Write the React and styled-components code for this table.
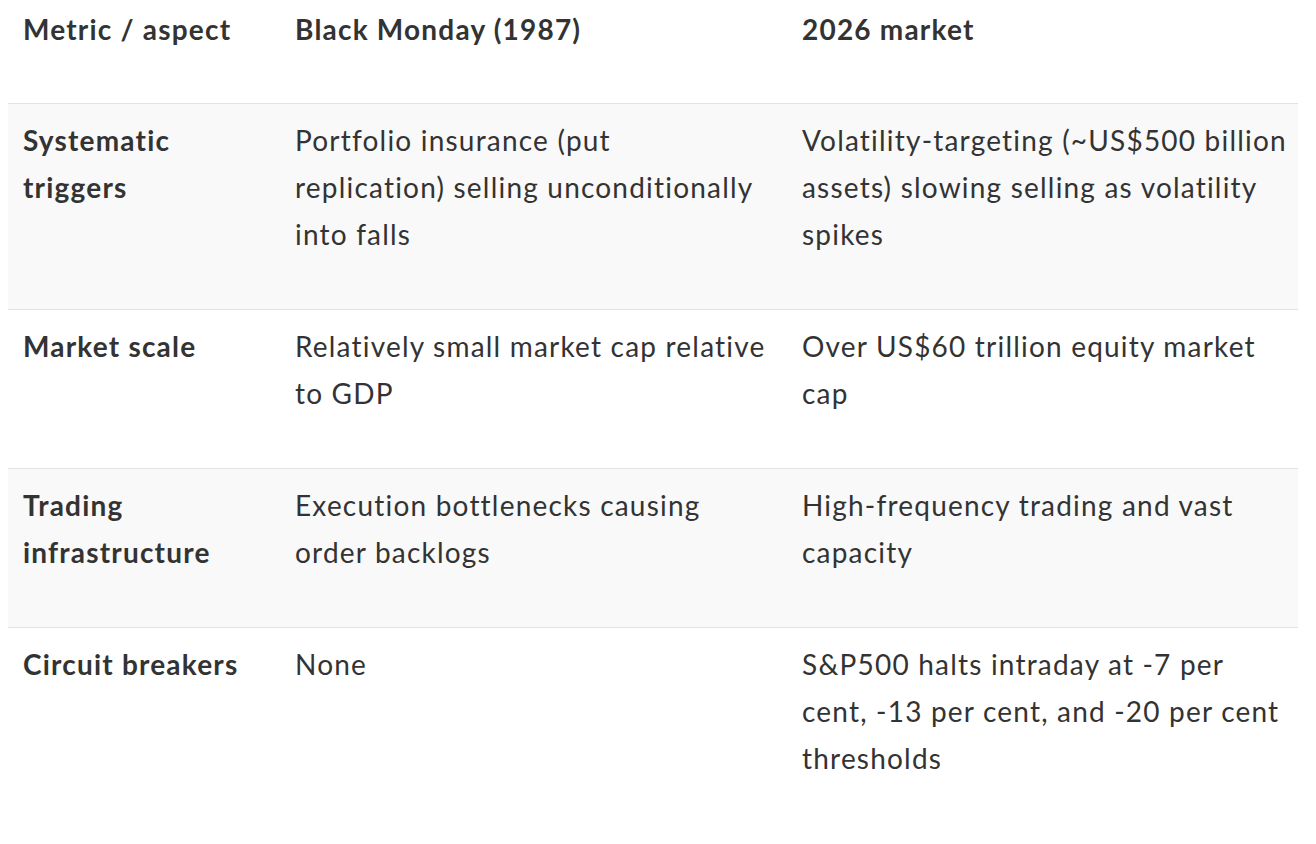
import React from "react";
import styled, { createGlobalStyle } from "styled-components";

const Global = createGlobalStyle`
  html, body { margin: 0; padding: 0; background: #fff; }
  body { padding: 0 8px; }
`;

const Table = styled.table`
  width: 1290px;
  border-collapse: collapse;
  table-layout: fixed;
  font-family: Lato, "Open Sans", sans-serif;
  font-size: 28px;
  line-height: 47px;
  letter-spacing: 1.2px;
  color: #333;
`;

const Col = styled.col`
  width: ${(p) => p.$w}px;
`;

const HeadCell = styled.th`
  text-align: left;
  vertical-align: top;
  font-weight: 700;
  padding: 6px ${(p) => p.$padR ?? 15}px 50px 15px;
`;

const Row = styled.tr`
  background: ${(p) => (p.$shaded ? "#f9f9f9" : "#fff")};
  border-top: 1px solid #e2e2e2;
`;

const LabelCell = styled.td`
  vertical-align: top;
  font-weight: 700;
  padding: 13px 15px 51px;
`;

const Cell = styled.td`
  vertical-align: top;
  font-weight: 400;
  padding: 13px ${(p) => p.$padR}px 51px 15px;
`;

const rows = [
  [
    "Systematic triggers",
    "Portfolio insurance (put replication) selling unconditionally into falls",
    "Volatility-targeting (~US$500 billion assets) slowing selling as volatility spikes",
  ],
  ["Market scale", "Relatively small market cap relative to GDP", "Over US$60 trillion equity market cap"],
  ["Trading infrastructure", "Execution bottlenecks causing order backlogs", "High-frequency trading and vast capacity"],
  [
    "Circuit breakers",
    "None",
    "S&P500 halts intraday at -7 per cent, -13 per cent, and -20 per cent thresholds",
  ],
];

export default function App() {
  return (
    <>
      <Global />
      <Table>
        <colgroup>
          <Col $w={272} />
          <Col $w={507} />
          <Col $w={511} />
        </colgroup>
        <thead>
          <tr>
            <HeadCell>Metric / aspect</HeadCell>
            <HeadCell $padR={20}>Black Monday (1987)</HeadCell>
            <HeadCell $padR={7}>2026 market</HeadCell>
          </tr>
        </thead>
        <tbody>
          {rows.map((r, i) => (
            <Row key={i} $shaded={i % 2 === 0}>
              <LabelCell>{r[0]}</LabelCell>
              <Cell $padR={20}>{r[1]}</Cell>
              <Cell $padR={7}>{r[2]}</Cell>
            </Row>
          ))}
        </tbody>
      </Table>
    </>
  );
}
